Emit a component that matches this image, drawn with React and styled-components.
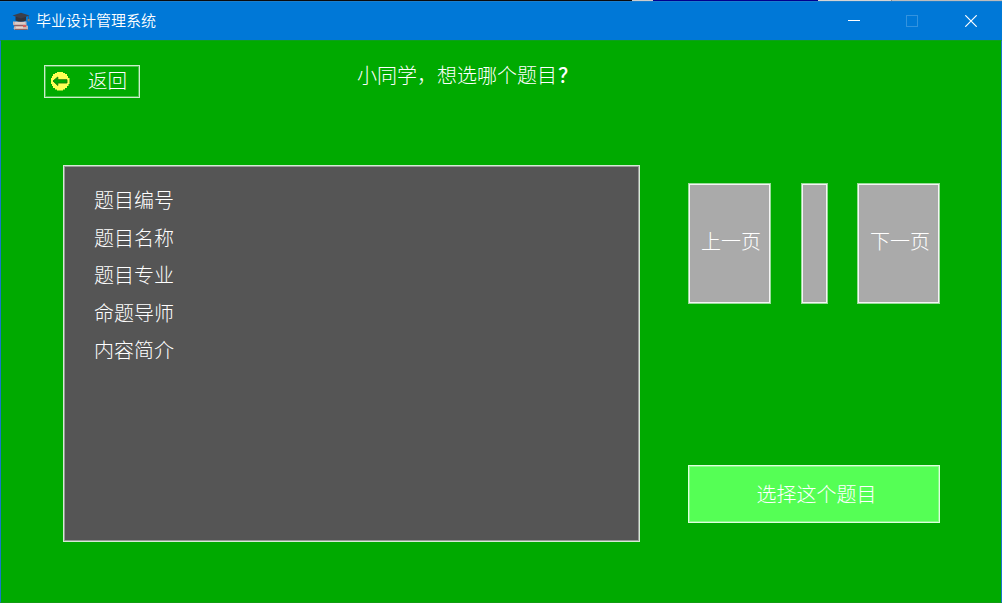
import React from "react";
import styled, { createGlobalStyle } from "styled-components";

const GlobalStyle = createGlobalStyle`
  * { box-sizing: border-box; }
  html, body { margin: 0; padding: 0; overflow: hidden; }
  body { font-family: "Noto Sans CJK SC", "Liberation Sans", sans-serif; }
`;

const Desktop = styled.div`
  width: 1002px;
  height: 603px;
  display: flex;
  flex-direction: column;
  overflow: hidden;
`;

const DesktopEdge = styled.div`
  display: flex;
  height: 1px;
  flex: none;
`;

const EdgePart = styled.div`
  width: ${(p) => p.$width}px;
  background: ${(p) => p.$color};
`;

const TitleBar = styled.header`
  height: 39px;
  flex: none;
  display: flex;
  align-items: center;
  padding: 0 2px 0 12px;
  background: #0078d7;
  border-top: 1px solid #1a7fce;
  color: #fff;
`;

const WindowTitle = styled.h1`
  margin: 0 auto 0 5px;
  padding-bottom: 2px;
  font-size: 15px;
  line-height: 20px;
  font-weight: 350;
`;

const WindowButton = styled.button`
  width: 58.5px;
  height: 38px;
  padding: 0;
  border: 0;
  background: none;
  display: flex;
  align-items: center;
  justify-content: center;
  color: ${(p) => (p.disabled ? "#3393df" : "#fff")};
`;

const Client = styled.main`
  flex: 1;
  background: #00aa00;
  border: 1px solid #1878c8;
  border-top-color: #0ca01c;
  border-bottom-color: #129c12;
  color: #fff;
  font-size: 20px;
  font-weight: 300;
`;

const TopRow = styled.div`
  display: flex;
  align-items: flex-start;
  height: 124px;
  padding: 24px 0 0 43px;
`;

const OutlinedButton = styled.button`
  width: ${(p) => p.$width}px;
  height: ${(p) => p.$height}px;
  padding: 0 0 ${(p) => p.$raise || 0}px ${(p) => p.$indent || 0}px;
  display: flex;
  align-items: center;
  justify-content: center;
  background: ${(p) => p.$fill || "transparent"};
  border: 1px solid rgba(255, 255, 255, 0.8);
  box-shadow: inset 0 0 0 1px rgba(255, 255, 255, 0.3);
  color: #fff;
  font: inherit;
  line-height: 28px;
`;

const BackButton = styled(OutlinedButton)`
  justify-content: flex-start;
  padding-left: 5px;
  gap: 17px;
  font-size: 19.5px;
`;

const PageButton = styled(OutlinedButton)`
  border-color: #9adc9a;
  box-shadow: inset 0 0 0 1px #f4f4f4;
`;

const BackLabel = styled.span`
  margin-top: -4px;
`;

const Question = styled.h2`
  margin: -5px 0 0 217px;
  font-size: 20px;
  line-height: 30px;
  font-weight: 300;
`;

const QuestionMark = styled.span`
  margin-left: 1px;
  font-weight: 500;
`;

const Body = styled.div`
  display: flex;
  padding-left: 62px;
`;

const Topic = styled.ul`
  list-style: none;
  margin: 0;
  width: 577px;
  height: 377px;
  padding: 15px 0 0 30px;
  background: #555;
  border: 1px solid #d4ecd4;
  box-shadow: inset 0 0 0 1px rgba(255, 255, 255, 0.4);
`;

const Field = styled.li`
  height: 37.5px;
  line-height: 37.5px;
`;

const Actions = styled.div`
  display: flex;
  flex-direction: column;
  justify-content: space-between;
  width: 252px;
  height: 340px;
  margin: 18px 0 0 48px;
`;

const Pager = styled.div`
  display: flex;
  justify-content: space-between;
`;

const GraduateIcon = () => (
  <svg width="19" height="19" viewBox="0 0 19 19">
    <path d="M1 9.5 L14.5 9.5 L14.5 13 L16 14 L16 17.5 L3 18 L1.5 16.5 L2.5 14 L1 12.5 Z" fill="#c9b5b4" />
    <path d="M2 13.6 H14.5" stroke="#8d5d62" strokeWidth="1.1" />
    <path d="M3 17.5 H15.5" stroke="#8b6261" strokeWidth="1" />
    <path d="M3 11 H13 M4 15.5 H11" stroke="#e5d4cc" strokeWidth="1.3" />
    <rect x="11" y="13" width="3" height="2" fill="#dc5b58" />
    <path d="M3.5 4.5 H14 V8.5 Q9 11 3.5 8.5 Z" fill="#30333e" />
    <path d="M0.5 3.5 L9 0.8 L17.5 3.5 L9 6.5 Z" fill="#3c3f4b" />
    <path d="M16.5 3.8 V8" stroke="#4c5360" strokeWidth="0.8" />
    <rect x="15.6" y="7" width="2" height="2.4" fill="#807d72" />
  </svg>
);

const BackIcon = () => (
  <svg width="21" height="21" viewBox="0 0 21 21">
    <path
      d="M7 1 H13 V2 H15 V3 H17 V5 H18 V7 H19.5 V13 H18.5 V15 H17 V17 H15 V18.5 H13 V19.5 H7 V18.5 H5 V17 H3 V15 H2 V13 H1 V7 H2 V5 H3 V3 H5 V2 H7 Z"
      fill="#ffff55"
    />
    <path d="M3 10 L7.8 6 V8.7 H17 V12 H7.8 V14.5 Z" fill="#00aa00" stroke="#167a0c" strokeWidth="0.9" />
  </svg>
);

const MinimizeIcon = () => (
  <svg width="12" height="12" viewBox="0 0 12 12" shapeRendering="crispEdges">
    <path d="M0 5.5 H12" stroke="currentColor" />
  </svg>
);

const MaximizeIcon = () => (
  <svg width="12" height="12" viewBox="0 0 12 12" shapeRendering="crispEdges">
    <rect x="0.5" y="0.5" width="11" height="11" fill="none" stroke="currentColor" />
  </svg>
);

const CloseIcon = () => (
  <svg width="12" height="12" viewBox="0 0 12 12">
    <path d="M0.3 0.3 L11.7 11.7 M11.7 0.3 L0.3 11.7" stroke="currentColor" strokeWidth="1.2" />
  </svg>
);

const edge = [
  [632, "#0b0b0d"],
  [21, "#cccccc"],
  [165, "#00008f"],
  [73, "#d4d4d4"],
  [1, "#8c8c8c"],
  [110, "#bcbcbc"],
];

const fields = ["题目编号", "题目名称", "题目专业", "命题导师", "内容简介"];

export default function App() {
  return (
    <Desktop>
      <GlobalStyle />
      <DesktopEdge>
        {edge.map(([width, color]) => (
          <EdgePart key={color} $width={width} $color={color} />
        ))}
      </DesktopEdge>
      <TitleBar>
        <GraduateIcon />
        <WindowTitle>毕业设计管理系统</WindowTitle>
        <WindowButton aria-label="最小化"><MinimizeIcon /></WindowButton>
        <WindowButton aria-label="最大化" disabled><MaximizeIcon /></WindowButton>
        <WindowButton aria-label="关闭"><CloseIcon /></WindowButton>
      </TitleBar>
      <Client>
        <TopRow>
          <BackButton $width={96} $height={33}>
            <BackIcon />
            <BackLabel>返回</BackLabel>
          </BackButton>
          <Question>小同学，想选哪个题目<QuestionMark>？</QuestionMark></Question>
        </TopRow>
        <Body>
          <Topic>
            {fields.map((name) => (
              <Field key={name}>{name}</Field>
            ))}
          </Topic>
          <Actions>
            <Pager>
              <PageButton $width={83} $height={121} $fill="#aaaaaa" $raise={5} $indent={3}>上一页</PageButton>
              <PageButton $width={27} $height={121} $fill="#aaaaaa" aria-label="页码" />
              <PageButton $width={83} $height={121} $fill="#aaaaaa" $raise={5} $indent={3}>下一页</PageButton>
            </Pager>
            <OutlinedButton $width={252} $height={58} $fill="#55ff55" $indent={5}>选择这个题目</OutlinedButton>
          </Actions>
        </Body>
      </Client>
    </Desktop>
  );
}
